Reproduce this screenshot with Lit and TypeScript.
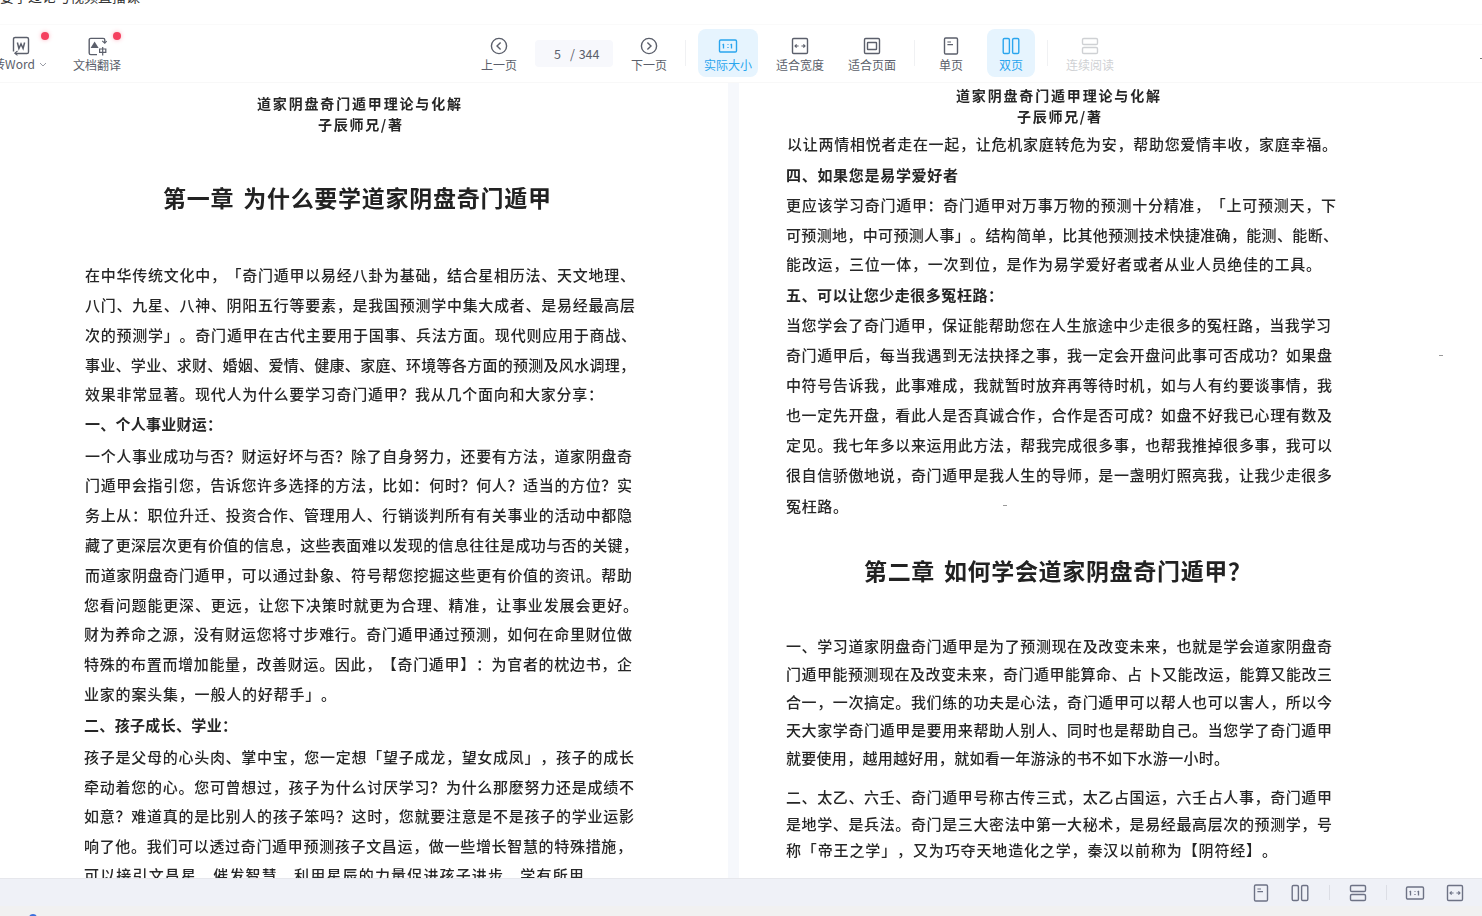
import { LitElement, html, css, svg } from 'lit';
import { customElement } from 'lit/decorators.js';

type Line = [string, number, number, number, string?];

// text, left x, right x, centre y, kind (b = bold heading, t = chapter title, h = page header)
const LEFT: Line[] = [
  ['道家阴盘奇门遁甲理论与化解', 257, 461, 103, 'h'],
  ['子辰师兄/著', 318, 402, 124, 'h'],
  ['第一章 为什么要学道家阴盘奇门遁甲', 163, 551, 197, 't'],
  ['在中华传统文化中，「奇门遁甲以易经八卦为基础，结合星相历法、天文地理、', 85, 635, 275],
  ['八门、九星、八神、阴阳五行等要素，是我国预测学中集大成者、是易经最高层', 85, 635, 305],
  ['次的预测学」。奇门遁甲在古代主要用于国事、兵法方面。现代则应用于商战、', 85, 636, 335],
  ['事业、学业、求财、婚姻、爱情、健康、家庭、环境等各方面的预测及风水调理，', 85, 635, 365],
  ['效果非常显著。现代人为什么要学习奇门遁甲？我从几个面向和大家分享：', 85, 603, 394],
  ['一、个人事业财运：', 85, 222, 424, 'b'],
  ['一个人事业成功与否？财运好坏与否？除了自身努力，还要有方法，道家阴盘奇', 85, 632, 456],
  ['门遁甲会指引您，告诉您许多选择的方法，比如：何时？何人？适当的方位？实', 85, 632, 485],
  ['务上从：职位升迁、投资合作、管理用人、行销谈判所有有关事业的活动中都隐', 85, 632, 515],
  ['藏了更深层次更有价值的信息，这些表面难以发现的信息往往是成功与否的关键，', 85, 638, 545],
  ['而道家阴盘奇门遁甲，可以通过卦象、符号帮您挖掘这些更有价值的资讯。帮助', 85, 632, 575],
  ['您看问题能更深、更远，让您下决策时就更为合理、精准，让事业发展会更好。', 84, 638, 605],
  ['财为养命之源，没有财运您将寸步难行。奇门遁甲通过预测，如何在命里财位做', 84, 632, 634],
  ['特殊的布置而增加能量，改善财运。因此，【奇门遁甲】：为官者的枕边书，企', 84, 632, 664],
  ['业家的案头集，一般人的好帮手」。', 84, 336, 694],
  ['二、孩子成长、学业：', 84, 237, 725, 'b'],
  ['孩子是父母的心头肉、掌中宝，您一定想「望子成龙，望女成凤」，孩子的成长', 84, 634, 757],
  ['牵动着您的心。您可曾想过，孩子为什么讨厌学习？为什么那麽努力还是成绩不', 84, 634, 787],
  ['如意？难道真的是比别人的孩子笨吗？这时，您就要注意是不是孩子的学业运影', 84, 634, 816],
  ['响了他。我们可以透过奇门遁甲预测孩子文昌运，做一些增长智慧的特殊措施，', 84, 632, 846],
  ['可以接引文昌星，催发智慧，利用星辰的力量促进孩子进步，学有所用。', 84, 600, 875],
];

const RIGHT: Line[] = [
  ['道家阴盘奇门遁甲理论与化解', 956, 1160, 95, 'h'],
  ['子辰师兄/著', 1017, 1101, 116, 'h'],
  ['以让两情相悦者走在一起，让危机家庭转危为安，帮助您爱情丰收，家庭幸福。', 787, 1337, 144],
  ['四、如果您是易学爱好者', 786, 958, 175, 'b'],
  ['更应该学习奇门遁甲：奇门遁甲对万事万物的预测十分精准，「上可预测天，下', 786, 1336, 205],
  ['可预测地，中可预测人事」。结构简单，比其他预测技术快捷准确，能测、能断、', 786, 1338, 235],
  ['能改运，三位一体，一次到位，是作为易学爱好者或者从业人员绝佳的工具。', 786, 1321, 264],
  ['五、可以让您少走很多冤枉路：', 786, 1003, 295, 'b'],
  ['当您学会了奇门遁甲，保证能帮助您在人生旅途中少走很多的冤枉路，当我学习', 786, 1331, 325],
  ['奇门遁甲后，每当我遇到无法抉择之事，我一定会开盘问此事可否成功？如果盘', 786, 1332, 355],
  ['中符号告诉我，此事难成，我就暂时放弃再等待时机，如与人有约要谈事情，我', 786, 1332, 385],
  ['也一定先开盘，看此人是否真诚合作，合作是否可成？如盘不好我已心理有数及', 786, 1332, 415],
  ['定见。我七年多以来运用此方法，帮我完成很多事，也帮我推掉很多事，我可以', 786, 1332, 445],
  ['很自信骄傲地说，奇门遁甲是我人生的导师，是一盏明灯照亮我，让我少走很多', 786, 1332, 475],
  ['冤枉路。', 786, 848, 506],
  ['第二章 如何学会道家阴盘奇门遁甲？', 864, 1251, 570, 't'],
  ['一、学习道家阴盘奇门遁甲是为了预测现在及改变未来，也就是学会道家阴盘奇', 786, 1332, 646],
  ['门遁甲能预测现在及改变未来，奇门遁甲能算命、占 卜又能改运，能算又能改三', 786, 1332, 674],
  ['合一，一次搞定。我们练的功夫是心法，奇门遁甲可以帮人也可以害人，所以今', 786, 1332, 702],
  ['天大家学奇门遁甲是要用来帮助人别人、同时也是帮助自己。当您学了奇门遁甲', 786, 1332, 730],
  ['就要使用，越用越好用，就如看一年游泳的书不如下水游一小时。', 786, 1229, 758],
  ['二、太乙、六壬、奇门遁甲号称古传三式，太乙占国运，六壬占人事，奇门遁甲', 786, 1332, 797],
  ['是地学、是兵法。奇门是三大密法中第一大秘术，是易经最高层次的预测学，号', 786, 1332, 824],
  ['称「帝王之学」，又为巧夺天地造化之学，秦汉以前称为【阴符经】。', 786, 1277, 850],
];

const ic = (body: unknown) => html`<svg class="ic" viewBox="0 0 20 20" fill="none" stroke="currentColor" stroke-width="1.4">${body}</svg>`;

const icons = {
  word: ic(svg`<path d="M2.5 15.5V3C2.5 2 3.2 1.5 4.1 1.5h11.8c.9 0 1.6.7 1.6 1.6v12.8c0 .9-.7 1.6-1.6 1.6H4.5"/><path d="M6.5 15L3.8 17.2l2.7 2.2" stroke-width="1.1"/><path d="M6.4 6.5l1.5 6 2.1-4.6 2.1 4.6 1.5-6" stroke-width="1.5"/>`),
  translate: ic(svg`<path d="M17.8 6.5V4c0-.9-.7-1.6-1.6-1.6H3.8c-.9 0-1.6.7-1.6 1.6v13c0 .9.7 1.6 1.6 1.6H10"/><path d="M15.2 4.8l2.6 2.4 2-2.2" stroke-width="1.1"/><path d="M7.6 5.5l4 6.5H3.6z" fill="currentColor" stroke="none"/><path d="M12.6 13h6.2v3.4h-6.2zM15.7 11v8.4" stroke-width="1.2"/>`),
  prev: ic(svg`<circle cx="10" cy="10" r="7.6"/><path d="M11.6 6.4L8 10l3.6 3.6"/>`),
  next: ic(svg`<circle cx="10" cy="10" r="7.6"/><path d="M8.4 6.4L12 10l-3.6 3.6"/>`),
  actual: ic(svg`<rect x="1.5" y="4" width="17" height="12" rx="1.2"/><path d="M5.5 8v4.4M10 8.2v.9M10 11v.9M13.5 8v4.4" stroke-width="1.3"/><path d="M4.4 8.8l1.1-.8M12.4 8.8l1.1-.8" stroke-width="1"/>`),
  width: ic(svg`<rect x="2.5" y="2.5" width="15" height="15" rx="1.2"/><path d="M5 10h3.6M11.4 10H15M6.6 8.4L5 10l1.6 1.6M13.4 8.4L15 10l-1.6 1.6" stroke-width="1.1"/>`),
  page: ic(svg`<rect x="2.5" y="2.5" width="15" height="15" rx="1.2"/><rect x="5.5" y="6.5" width="9" height="7" rx=".5"/>`),
  single: ic(svg`<rect x="3.5" y="2" width="13" height="16" rx="1.2"/><path d="M6.4 6h3.6M6.4 8.6h5.6" stroke-width="1.1"/>`),
  double: ic(svg`<rect x="2.2" y="2.5" width="6.2" height="15" rx="1.3"/><rect x="11.6" y="2.5" width="6.2" height="15" rx="1.3"/>`),
  scroll: ic(svg`<rect x="2.5" y="2.5" width="15" height="6" rx="1.3"/><rect x="2.5" y="11.5" width="15" height="6" rx="1.3"/>`),
};

const tools = [
  { key: 'prev', label: '上一页', w: 'w48' },
  { page: true },
  { key: 'next', label: '下一页', w: 'w48' },
  { sep: true },
  { key: 'actual', label: '实际大小', w: 'w60', on: true },
  { key: 'width', label: '适合宽度', w: 'w72 ml6' },
  { key: 'page', label: '适合页面', w: 'w72' },
  { sep: true, tight: true },
  { key: 'single', label: '单页', w: 'w48' },
  { key: 'double', label: '双页', w: 'w48 ml12', on: true },
  { sep: true },
  { key: 'scroll', label: '连续阅读', w: 'w60', off: true },
] as any[];

@customElement('app-root')
export class AppRoot extends LitElement {
  static styles = css`
    :host {
      display: flex;
      flex-direction: column;
      width: 1482px;
      height: 916px;
      overflow: hidden;
      background: #fff;
      font-family: "Noto Sans CJK SC", "Noto Sans", sans-serif;
    }

    .strip {
      height: 24px;
      flex: none;
      overflow: hidden;
      font-size: 14px;
      line-height: 14px;
      color: #333;
      white-space: nowrap;
    }

    .strip span {
      display: block;
      margin-top: -11px;
    }

    .toolbar {
      display: flex;
      height: 59px;
      flex: none;
      padding-top: 4px;
      box-sizing: border-box;
      border-top: 1px solid #fafafa;
      border-bottom: 1px solid #f8f8f8;
      position: relative;
    }

    .left-tools {
      display: flex;
      width: 475px;
      flex: none;
    }

    .tool {
      display: flex;
      flex-direction: column;
      align-items: center;
      height: 48px;
      flex: none;
      box-sizing: border-box;
      padding-top: 7px;
      border-radius: 8px;
      color: #5b5f6b;
      font-size: 12px;
      line-height: 16px;
      white-space: nowrap;
    }

    .tool .ic {
      width: 20px;
      height: 20px;
      margin-bottom: 1px;
    }

    .tool.on {
      background: #e6f4fe;
      color: #2aa5ee;
    }

    .tool.off {
      color: #cfd1d4;
    }

    .w48 { width: 48px; }
    .w60 { width: 60px; }
    .w72 { width: 72px; }
    .ml6 { margin-left: 6px; }
    .ml12 { margin-left: 12px; }

    .word {
      width: 56px;
      margin-left: -7px;
      position: relative;
    }

    .word-label {
      display: flex;
      align-items: center;
      gap: 4px;
      margin-left: -2px;
      margin-top: -1px;
    }

    .translate {
      margin-left: 24px;
      position: relative;
    }

    .dot {
      position: absolute;
      top: 3px;
      width: 8px;
      height: 8px;
      border-radius: 50%;
      background: #f5405f;
      box-shadow: 0 0 4px rgba(245, 64, 95, .4);
    }

    .pager {
      width: 78px;
      height: 27px;
      flex: none;
      margin: 11px 12px 0;
      display: flex;
      align-items: center;
      gap: 9px;
      padding-left: 19px;
      box-sizing: border-box;
      background: #f7f8fc;
      border-radius: 4px;
      font-size: 12.5px;
      color: #5b5f6b;
      word-spacing: 1px;
    }

    .sep {
      width: 1px;
      height: 26px;
      flex: none;
      margin: 11px 12px 0;
      background: #f0f1f3;
    }

    .sep.tight {
      margin-left: 6px;
    }

    .edge {
      position: absolute;
      right: 0;
      top: 33px;
      width: 2px;
      height: 1px;
      background: #777;
    }

    .doc {
      flex: 1;
      min-height: 0;
      display: grid;
      grid-template-columns: 728px 11px 1fr;
      overflow: hidden;
    }

    .gutter {
      background: #f6f8fc;
    }

    .page {
      position: relative;
      overflow: hidden;
      color: #262626;
      filter: blur(0.3px);
    }

    .ln {
      font-size: 15px;
      line-height: 24px;
      font-weight: 500;
      text-align: justify;
      text-align-last: justify;
      text-spacing-trim: space-all;
    }

    .ln.b {
      font-weight: 700;
    }

    .ln.t {
      font-size: 23px;
      font-weight: 700;
      color: #222;
      word-spacing: 3px;
    }

    .ln.h {
      font-size: 14px;
      font-weight: 700;
    }

    .speck {
      position: absolute;
      width: 4px;
      height: 1px;
      background: #999;
    }

    .bottom {
      display: flex;
      align-items: center;
      justify-content: flex-end;
      height: 28px;
      flex: none;
      box-sizing: border-box;
      padding-right: 17px;
      background: #eff1f7;
      border-top: 1px solid #e6e7ec;
      color: #6d7285;
    }

    .bottom .ic {
      width: 20px;
      height: 20px;
      flex: none;
    }

    .g19 { margin-left: 19px; display: flex; }
    .g20 { margin-left: 20px; display: flex; }

    .bar {
      width: 1px;
      height: 15px;
      flex: none;
      background: #dcdee5;
      margin: 0 18px;
    }

    .bar.wide {
      margin-left: 19px;
    }

    .foot {
      height: 10px;
      flex: none;
      background: #f1f1f1;
      overflow: hidden;
      padding: 8px 0 0 29px;
      box-sizing: border-box;
    }

    .foot i {
      display: block;
      width: 8px;
      height: 8px;
      border-radius: 50%;
      background: #3b6fdc;
    }
  `;

  private _page(lines: Line[], originX: number, specks: number[][]) {
    return html`<div class="page" style="padding-top:${lines[0][3] - 12 - 83}px">
      ${lines.map(([text, x0, x1, y, kind], i) => {
        const next = i + 1 < lines.length ? lines[i + 1][3] : y + 30;
        return html`<div
          class="ln ${kind ?? ''}"
          style="height:${next - y}px;margin-left:${x0 - originX}px;width:${x1 - x0}px"
        >${text}</div>`;
      })}
      ${specks.map(([x, y]) => html`<span class="speck" style="left:${x - originX}px;top:${y - 83}px"></span>`)}
    </div>`;
  }

  private _tool(t: any) {
    if (t.page) return html`<div class="pager"><span>5</span><span>/ 344</span></div>`;
    if (t.sep) return html`<div class="sep ${t.tight ? 'tight' : ''}"></div>`;
    return html`<div class="tool ${t.w} ${t.on ? 'on' : ''} ${t.off ? 'off' : ''}">
      ${(icons as any)[t.key]}<span>${t.label}</span>
    </div>`;
  }

  render() {
    return html`
      <div class="strip"><span>要学过论与视频直播课</span></div>
      <div class="toolbar">
        <div class="left-tools">
          <div class="tool word">
            ${icons.word}
            <span class="word-label">转Word
              <svg width="8" height="5" viewBox="0 0 8 5" fill="none" stroke="#9a9da6"><path d="M1 1l3 3 3-3"/></svg>
            </span>
            <span class="dot" style="left:48px"></span>
          </div>
          <div class="tool translate w48">
            ${icons.translate}<span>文档翻译</span>
            <span class="dot" style="left:40px"></span>
          </div>
        </div>
        ${tools.map((t) => this._tool(t))}
        <span class="edge"></span>
      </div>
      <div class="doc">
        ${this._page(LEFT, 0, [])}
        <div class="gutter"></div>
        ${this._page(RIGHT, 739, [[1439, 355], [1003, 505]])}
      </div>
      <div class="bottom">
        ${icons.single}
        <span class="g19">${icons.double}</span>
        <div class="bar wide"></div>
        ${icons.scroll}
        <div class="bar"></div>
        ${icons.actual}
        <span class="g20">${icons.width}</span>
      </div>
      <div class="foot"><i></i></div>
    `;
  }
}
